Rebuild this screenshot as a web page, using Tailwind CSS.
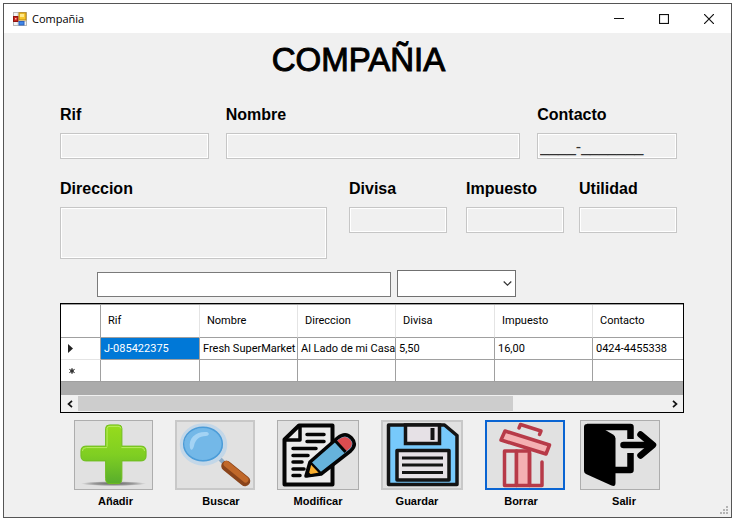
<!DOCTYPE html>
<html lang="es">
<head>
<meta charset="utf-8">
<meta name="viewport" content="width=device-width, initial-scale=1">
<title>Compañia</title>
<script src="https://cdn.jsdelivr.net/npm/@tailwindcss/browser@4"></script>
</head>
<body class="bg-white font-['Liberation_Sans',Arial,sans-serif] text-black">
<div class="flex min-h-screen pt-[3px] pr-[7px] pb-[6px] pl-[3px]">
<div class="relative flex flex-1 flex-col border border-[#555555] bg-[#f0f0f0]">

  <header class="flex h-[29px] items-center bg-white pl-[9px]">
    <svg class="size-[14px]" viewBox="0 0 14 14" aria-hidden="true">
      <rect x="0.500" y="0.500" width="13" height="13" fill="#f4f4f4" stroke="#b9b9b9"/>
      <path d="M5 1v12M1 9.500h12" stroke="#cfcfcf"/>
      <rect x="0.500" y="4.500" width="4.500" height="5" fill="#c8241c" stroke="#8f1510"/>
      <rect x="2" y="6" width="1.500" height="1.500" fill="#ffb8a8"/>
      <rect x="6" y="0.800" width="7" height="7.200" fill="#f8c72c" stroke="#b8850c"/>
      <rect x="7" y="2" width="4" height="3" fill="#ffe98a"/>
      <rect x="6" y="9.500" width="5" height="3.500" fill="#3f86e8" stroke="#2b62bd"/>
    </svg>
    <span class="ml-[5px] flex-1 font-['Open_Sans','Noto_Sans',sans-serif] text-[11px] leading-4">Compañia</span>
    <div class="flex h-full">
      <button type="button" aria-label="Minimizar" class="grid w-[45px] place-items-center">
        <svg class="size-[10px]" viewBox="0 0 10 10"><path d="M0 4.500h10" stroke="#111"/></svg>
      </button>
      <button type="button" aria-label="Maximizar" class="grid w-[45px] place-items-center">
        <svg class="size-[10px]" viewBox="0 0 10 10"><rect x="0.500" y="0.500" width="9" height="9" fill="none" stroke="#111" stroke-width="1.200"/></svg>
      </button>
      <button type="button" aria-label="Cerrar" class="grid w-[45px] place-items-center">
        <svg class="size-[10px]" viewBox="0 0 10 10"><path d="M0 0l10 10M10 0L0 10" stroke="#111" stroke-width="1.200"/></svg>
      </button>
    </div>
  </header>

  <main class="flex-1 pr-[47px] pl-[56px]">
    <h1 class="pt-[8px] pr-[27px] text-center text-[33px] leading-[38px] [-webkit-text-stroke:1px_black]">COMPAÑIA</h1>

    <form class="pr-[7px]">
      <div class="grid grid-cols-[149fr_295fr_140fr] gap-[17px] pt-[26px]">
        <div>
          <label for="rif" class="block text-[16px] leading-5 font-bold">Rif</label>
          <input id="rif" type="text" class="mt-[8px] block h-[26px] w-full border border-[#c6c6c6] px-[2px] inset-ring inset-ring-white outline-none">
        </div>
        <div>
          <label for="nombre" class="block text-[16px] leading-5 font-bold">Nombre</label>
          <input id="nombre" type="text" class="mt-[8px] block h-[26px] w-full border border-[#c6c6c6] px-[2px] inset-ring inset-ring-white outline-none">
        </div>
        <div>
          <label for="contacto" class="block text-[16px] leading-5 font-bold">Contacto</label>
          <input id="contacto" type="text" value="____-_______" class="mt-[8px] block h-[26px] w-full border border-[#c6c6c6] px-[2px] pt-[2px] text-[16px] text-[#333333] inset-ring inset-ring-white outline-none">
        </div>
      </div>
      <div class="grid grid-cols-[289fr_117fr_113fr_98fr] pt-[20px]">
        <div class="pr-[22px]">
          <label for="direccion" class="block text-[16px] leading-5 font-bold">Direccion</label>
          <textarea id="direccion" class="mt-[8px] block h-[52px] w-full resize-none border border-[#c6c6c6] px-[2px] inset-ring inset-ring-white outline-none"></textarea>
        </div>
        <div class="pr-[19px]">
          <label for="divisa" class="block text-[16px] leading-5 font-bold">Divisa</label>
          <input id="divisa" type="text" class="mt-[8px] block h-[26px] w-full border border-[#c6c6c6] px-[2px] inset-ring inset-ring-white outline-none">
        </div>
        <div class="pr-[15px]">
          <label for="impuesto" class="block text-[16px] leading-5 font-bold">Impuesto</label>
          <input id="impuesto" type="text" class="mt-[8px] block h-[26px] w-full border border-[#c6c6c6] px-[2px] inset-ring inset-ring-white outline-none">
        </div>
        <div>
          <label for="utilidad" class="block text-[16px] leading-5 font-bold">Utilidad</label>
          <input id="utilidad" type="text" class="mt-[8px] block h-[26px] w-full border border-[#c6c6c6] px-[2px] inset-ring inset-ring-white outline-none">
        </div>
      </div>
    </form>

    <div class="flex items-end gap-[6px] pt-[11px] pr-[168px] pl-[37px]">
      <input type="text" aria-label="Texto a buscar" class="h-[25px] min-w-0 flex-1 border border-[#7a7a7a] bg-white px-[2px] outline-none">
      <div class="grid w-[119px] items-center">
        <select aria-label="Buscar por" class="col-start-1 row-start-1 h-[27px] appearance-none border border-[#707070] bg-white px-1 text-[13px] outline-none"><option></option></select>
        <svg class="pointer-events-none col-start-1 row-start-1 mr-[4px] h-[5px] w-[9px] justify-self-end" viewBox="0 0 9 5"><path d="M0.700 0.500l3.800 3.600L8.300 0.500" fill="none" stroke="#333" stroke-width="1.200"/></svg>
      </div>
    </div>

    <section class="mt-[6px] border border-black bg-[#ababab]" aria-label="Compañias">
      <table class="w-full table-fixed border-separate border-spacing-0 border-t border-[#a0a0a0] text-left font-[Roboto,'Liberation_Sans',sans-serif] text-[11px] leading-4">
        <colgroup><col class="w-[40px]"><col class="w-[99px]"><col class="w-[98px]"><col class="w-[98px]"><col class="w-[99px]"><col class="w-[98px]"><col></colgroup>
        <thead>
          <tr class="h-[33px] bg-white">
            <th class="border-r border-b border-[#a0a0a0] p-0" aria-label="Fila"></th>
            <th class="border-r border-b border-r-[#e4e4e4] border-b-[#a0a0a0] p-0 pl-[7px] font-normal">Rif</th>
            <th class="border-r border-b border-r-[#e4e4e4] border-b-[#a0a0a0] p-0 pl-[7px] font-normal">Nombre</th>
            <th class="border-r border-b border-r-[#e4e4e4] border-b-[#a0a0a0] p-0 pl-[7px] font-normal">Direccion</th>
            <th class="border-r border-b border-r-[#e4e4e4] border-b-[#a0a0a0] p-0 pl-[7px] font-normal">Divisa</th>
            <th class="border-r border-b border-r-[#e4e4e4] border-b-[#a0a0a0] p-0 pl-[7px] font-normal">Impuesto</th>
            <th class="border-b border-[#a0a0a0] p-0 pl-[7px] font-normal">Contacto</th>
          </tr>
        </thead>
        <tbody>
          <tr class="h-[22px] bg-white whitespace-nowrap">
            <td class="border-r border-b border-r-[#a0a0a0] border-b-[#e4e4e4] p-0 pl-[7px]"><svg class="h-[9px] w-[5px]" viewBox="0 0 5 9"><path d="M0 0l5 4.500L0 9z" fill="#222"/></svg></td>
            <td class="border-r border-b border-[#a0a0a0] bg-[#0078d7] p-0 pl-[3px] text-white">J-085422375</td>
            <td class="border-r border-b border-[#a0a0a0] p-0 pl-[3px]">Fresh SuperMarket</td>
            <td class="border-r border-b border-[#a0a0a0] p-0 pl-[3px]">Al Lado de mi Casa</td>
            <td class="border-r border-b border-[#a0a0a0] p-0 pl-[3px]">5,50</td>
            <td class="border-r border-b border-[#a0a0a0] p-0 pl-[3px]">16,00</td>
            <td class="border-b border-[#a0a0a0] p-0 pl-[3px]">0424-4455338</td>
          </tr>
          <tr class="h-[22px] bg-white">
            <td class="border-r border-b border-[#a0a0a0] p-0 pl-[8px]"><svg class="size-[6px]" viewBox="0 0 6 6"><circle cx="3" cy="3" r="1.800" fill="#333"/><path d="M3 0v6M0.300 1.300l5.400 3.400M5.700 1.300L0.300 4.700" stroke="#333"/></svg></td>
            <td class="border-r border-b border-[#a0a0a0] p-0"></td>
            <td class="border-r border-b border-[#a0a0a0] p-0"></td>
            <td class="border-r border-b border-[#a0a0a0] p-0"></td>
            <td class="border-r border-b border-[#a0a0a0] p-0"></td>
            <td class="border-r border-b border-[#a0a0a0] p-0"></td>
            <td class="border-b border-[#a0a0a0] p-0"></td>
          </tr>
        </tbody>
      </table>
      <div class="mt-[13px] flex h-[17px] bg-[#f0f0f0] py-px">
        <button type="button" aria-label="Desplazar a la izquierda" class="grid w-[17px] place-items-center"><svg class="h-[8px] w-[6px]" viewBox="0 0 6 8"><path d="M5 0.800L1.500 4 5 7.200" fill="none" stroke="#111" stroke-width="1.700"/></svg></button>
        <div class="flex flex-1"><div class="w-[74%] bg-[#cdcdcd]"></div></div>
        <button type="button" aria-label="Desplazar a la derecha" class="grid w-[17px] place-items-center"><svg class="h-[8px] w-[6px]" viewBox="0 0 6 8"><path d="M1 0.800L4.500 4 1 7.200" fill="none" stroke="#111" stroke-width="1.700"/></svg></button>
      </div>
    </section>

    <div class="flex justify-between pt-[7px] pr-[24px] pb-[9px] pl-[14px] text-center text-[11px] leading-[14px] font-bold">
      <div class="flex gap-[22px]">
      <div class="w-[79px]">
        <button type="button" aria-labelledby="l1" class="block h-[70px] w-full border border-[#adadad] bg-[#e1e1e1]">
          <svg class="h-full w-full" viewBox="0 0 78 68">
            <defs>
              <linearGradient id="green" x1="0" y1="0" x2="0" y2="1"><stop offset="0" stop-color="#97dc1c"/><stop offset="0.500" stop-color="#80cf22"/><stop offset="1" stop-color="#58ad2c"/></linearGradient>
              <radialGradient id="shade"><stop offset="0" stop-color="#666"/><stop offset="0.600" stop-color="#999"/><stop offset="1" stop-color="#e1e1e1"/></radialGradient>
            </defs>
            <ellipse cx="39" cy="63" rx="33" ry="2.500" fill="url(#shade)"/>
            <path d="M35 3.500h9q3.500 0 3.500 3.500v18H67q5 0 5 5v5q0 5-5 5H47.500v18q0 5-4 5h-8q-4.500 0-4.500-5V40H11q-5 0-5-5v-5q0-5 5-5h20V7q0-3.500 4-3.500z" fill="url(#green)" stroke="#70bd20"/>
            <path d="M32.500 25.500V7q0-2 3-2h8q3 0 3 2M7.500 30q0-3.500 4-3.500h21M47 26.500h20q3.500 0 3.500 3.500" fill="none" stroke="#b8ec62"/>
          </svg>
        </button>
        <div id="l1" class="pt-[4px] pl-[4px]">Añadir</div>
      </div>
      <div class="w-[80px]">
        <button type="button" aria-labelledby="l2" class="block h-[70px] w-full border-2 border-[#c8c8c8] bg-[#e1e1e1]">
          <svg class="h-full w-full" viewBox="0 0 76 66">
            <path d="M42 36l8 8" stroke="#8eaac4" stroke-width="4"/>
            <path d="M49.500 44L68 59" stroke="#8a441b" stroke-width="10.500" stroke-linecap="round"/>
            <path d="M49.500 42L68.500 57.500" stroke="#c0682a" stroke-width="6" stroke-linecap="round"/>
            <ellipse cx="26.500" cy="22.500" rx="21.500" ry="19" fill="#73b8e8" stroke="#c3d7e8" stroke-width="4.500"/>
            <ellipse cx="26" cy="22" rx="19.300" ry="16.800" fill="none" stroke="#4b9cd8" stroke-width="1.500"/>
            <path d="M13 26C11 15 20 9 30 10c3 1 2 4-1 4-7 0-11 4-12 10-1 4-3 5-4 2z" fill="#a3d3f4"/>
          </svg>
        </button>
        <div id="l2" class="pt-[4px] pl-[12px]">Buscar</div>
      </div>
      <div class="w-[82px]">
        <button type="button" aria-labelledby="l3" class="block h-[70px] w-full border border-[#adadad] bg-[#e1e1e1]">
          <svg class="h-full w-full" viewBox="0 0 80 68">
            <path d="M6.500 18.500L21 4.500h33.500v59h-48z" fill="#ececec" stroke="#050505" stroke-width="4" stroke-linejoin="round"/>
            <path d="M7 19h15V5" fill="none" stroke="#050505" stroke-width="3.500" stroke-linejoin="round"/>
            <path d="M29 13.500h17M29 20.500h17M15 27.500h23M15 34.500h15M15 41h9M15 48h11M15 54.500h7" stroke="#050505" stroke-width="3.500" stroke-linecap="round"/>
            <path d="M28 55l4-14L59.500 17q8-6.500 14 0t-1 13L43 53z" fill="#66b3db" stroke="#050505" stroke-width="3.500" stroke-linejoin="round"/>
            <path d="M60.500 18.500q7-5 11.500 0t-1 9.500l-3 2.500L59 20z" fill="#db4c50"/>
            <path d="M57 19.500l10.500 11.500" stroke="#050505" stroke-width="3"/>
            <path d="M32.500 41.500l10.500 11L29 55z" fill="#f9ae2d" stroke="#050505" stroke-width="2.500" stroke-linejoin="round"/>
            <path d="M28 55l1.500-5 4 4z" fill="#050505"/>
          </svg>
        </button>
        <div id="l3" class="pt-[4px]">Modificar</div>
      </div>
      <div class="w-[82px]">
        <button type="button" aria-labelledby="l4" class="block h-[70px] w-full border-2 border-[#c8c8c8] bg-[#e1e1e1]">
          <svg class="h-full w-full" viewBox="0 0 78 66">
            <path d="M5.500 3h56L74 13.500V62.500H5.500z" fill="#77c9fb" stroke="#141414" stroke-width="3.500" stroke-linejoin="round"/>
            <path d="M22.500 3h34v18.500h-34z" fill="#e6e1e6" stroke="#141414" stroke-width="3.500"/>
            <path d="M49.500 6v12" stroke="#141414" stroke-width="4"/>
            <path d="M14 28.500h52v29.500H14z" fill="#e6e1e6" stroke="#141414" stroke-width="3.500" stroke-linejoin="round"/>
            <path d="M19 36h41M19 43h41M19 50.500h41" stroke="#141414" stroke-width="3"/>
          </svg>
        </button>
        <div id="l4" class="pt-[4px] pr-[10px]">Guardar</div>
      </div>
      <div class="w-[80px]">
        <button type="button" aria-labelledby="l5" class="block h-[70px] w-full border-2 border-[#0a64d2] bg-[#e1e1e1]">
          <svg class="h-full w-full" viewBox="0 0 76 66" fill="none" stroke="#b73a48" stroke-width="3.500" stroke-linejoin="round" stroke-linecap="round">
            <path d="M17.500 29h12v34.500H17.500z"/>
            <path d="M29.500 29h13v34.500H29.500z" fill="#f4b0b2"/>
            <path d="M42.500 31v32.500H55V40"/>
            <path d="M18 9l44.500 14-3.500 9L14 18z" fill="#f4b0b2"/>
            <path d="M32 6l1.500-3.500L54 9l-1.500 3.500"/>
          </svg>
        </button>
        <div id="l5" class="pt-[4px] pr-[8px]">Borrar</div>
      </div>
      </div>
      <div class="w-[80px]">
        <button type="button" aria-labelledby="l6" class="block h-[70px] w-full border border-[#adadad] bg-[#e1e1e1]">
          <svg class="h-full w-full" viewBox="0 0 78 68">
            <path d="M6 6h43.500v12M34 49h15.500V32" fill="none" stroke="#000" stroke-width="6.500" stroke-linejoin="round"/>
            <path d="M3 6q0-3 3-3h8l18 10.500q2.500 1.500 2.500 4V62q0 4-4 2.500L5 53q-2-1-2-3z" fill="#000"/>
            <path d="M42.500 24H70" stroke="#000" stroke-width="6.500" stroke-linecap="round"/>
            <path d="M59.500 13.500L72 24 59.500 34.500" fill="none" stroke="#000" stroke-width="6.500" stroke-linejoin="round" stroke-linecap="round"/>
          </svg>
        </button>
        <div id="l6" class="pt-[4px] pl-[8px]">Salir</div>
      </div>
    </div>
  </main>

  <svg class="absolute right-[2px] bottom-[2px] size-[9px]" viewBox="0 0 9 9" fill="#b4b4b4" aria-hidden="true">
    <path d="M6 0h2v2H6zM3 3h2v2H3zM6 3h2v2H6zM0 6h2v2H0zM3 6h2v2H3zM6 6h2v2H6z"/>
  </svg>
</div>
</div>
</body>
</html>
